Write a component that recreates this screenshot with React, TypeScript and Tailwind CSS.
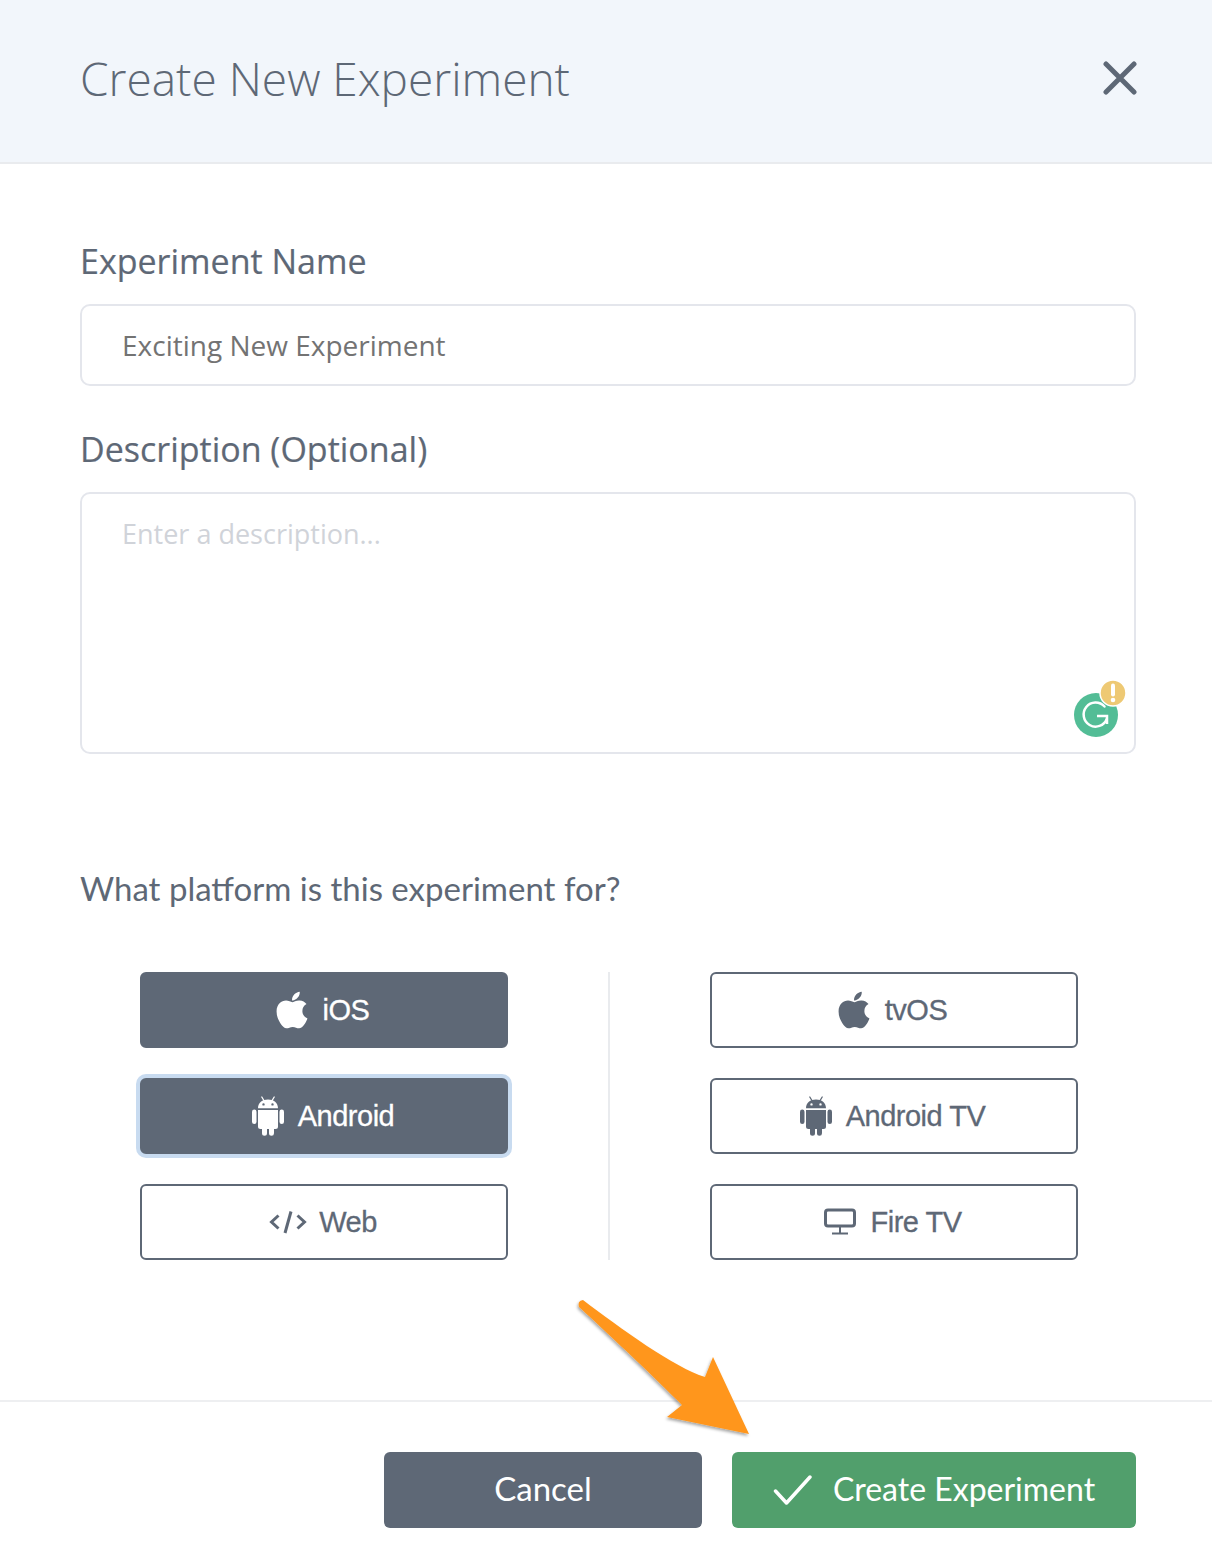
import React from "react";
import { FaApple } from "react-icons/fa";

const AndroidIcon = () => (
  <svg width="34" height="40" viewBox="0 0 34 40" fill="currentColor">
    <path d="M10.800 1 13.200 5M23.200 1 20.800 5" stroke="currentColor" strokeWidth="1.300" strokeLinecap="round" />
    <path fillRule="evenodd" d="M7 12.200C7 6.800 11.300 3.500 17 3.500s10 3.300 10 8.700H7ZM12.500 7.200a1.200 1.200 0 1 0 0 2.400 1.200 1.200 0 0 0 0-2.400Zm9 0a1.200 1.200 0 1 0 0 2.400 1.200 1.200 0 0 0 0-2.400Z" />
    <path d="M7 14h20v16.500a2.500 2.500 0 0 1-2.500 2.500H23v4.300a2.500 2.500 0 0 1-5 0V33h-2v4.300a2.500 2.500 0 0 1-5 0V33H9.500A2.500 2.500 0 0 1 7 30.500V14Z" />
    <rect x="1" y="13.500" width="4.500" height="14.500" rx="2.250" />
    <rect x="28.500" y="13.500" width="4.500" height="14.500" rx="2.250" />
  </svg>
);

const CodeIcon = () => (
  <svg width="38" height="24" viewBox="0 0 38 24" fill="none" stroke="currentColor" strokeWidth="3">
    <path d="M9.500 5.500 2.500 12l7 6.500" />
    <path d="M22 1.500 16 23" />
    <path d="M28.500 5.500 35.500 12l-7 6.500" />
  </svg>
);

const MonitorIcon = () => (
  <svg width="32" height="28" viewBox="0 0 32 28" fill="none" stroke="currentColor">
    <rect x="1.500" y="2" width="29" height="16" rx="2.500" strokeWidth="3" />
    <path d="M16 19v6" strokeWidth="2" />
    <path d="M8 25.500h16" strokeWidth="2" />
  </svg>
);

function PlatformButton({
  label,
  icon,
  active,
  focused,
  layout,
}: {
  label: string;
  icon: React.ReactNode;
  active?: boolean;
  focused?: boolean;
  layout: string;
}) {
  const base =
    "flex h-[76px] w-[368px] items-center justify-center rounded-[6px] border-2 font-['Liberation_Sans',sans-serif] text-[29px] tracking-[-0.5px] [-webkit-text-stroke:0.3px] " +
    layout;
  const tone = active
    ? " border-[#5e6876] bg-[#5e6876] text-white"
    : " border-[#5e6876] bg-white text-[#5e6876]";
  const ring = focused ? " shadow-[0_0_0_4px_#c8dbf0]" : "";
  return (
    <button className={base + tone + ring}>
      {icon}
      <span className="pt-[2px]">{label}</span>
    </button>
  );
}

export default function App() {
  return (
    <div className="relative h-[1544px] w-[1212px] overflow-hidden bg-white font-['Open_Sans',sans-serif]">
      <header className="flex h-[164px] items-center justify-between border-b-2 border-[#e9ebee] bg-[#f2f6fb] pl-20 pr-[75px]">
        <h1 className="pb-[6px] text-[46px] font-light leading-none text-[#5e6876]">Create New Experiment</h1>
        <svg width="34" height="34" viewBox="0 0 34 34" fill="none" stroke="#5e6876" strokeWidth="5" strokeLinecap="round" className="mb-[6px]">
          <path d="M3 3l28 28M31 3 3 31" />
        </svg>
      </header>

      <main className="pl-20 pr-[76px]">
        <label className="mt-[75px] block pb-[1px] text-[34px] leading-[44px] text-[#5e6876] [-webkit-text-stroke:0.2px]">Experiment Name</label>
        <div className="mt-[20px] flex h-[82px] items-center rounded-[10px] border-2 border-[#e4e6ec] pl-[40px] text-[28px] text-[#737373]">
          Exciting New Experiment
        </div>

        <label className="mt-[41px] block pb-[1px] text-[34px] leading-[44px] text-[#5e6876] [-webkit-text-stroke:0.2px]">Description (Optional)</label>
        <div className="mt-[20px] h-[262px] rounded-[10px] border-2 border-[#e4e6ec] pl-[40px] pt-[21px] text-[27px] leading-[38px] text-[#d0d3d9]">
          Enter a description...
        </div>

        <p className="mt-[115px] font-['Lato',sans-serif] text-[33px] leading-[38px] text-[#5e6876]">
          What platform is this experiment for?
        </p>

        <div className="ml-[60px] mt-[65px] flex w-[938px] justify-between">
          <div className="flex flex-col gap-[30px]">
            <PlatformButton label="iOS" active icon={<FaApple size={42} />} layout="gap-[10px] pr-[8px]" />
            <PlatformButton label="Android" active focused icon={<AndroidIcon />} layout="gap-[13px] pr-[3px]" />
            <PlatformButton label="Web" icon={<CodeIcon />} layout="gap-[12px] pr-[2px]" />
          </div>
          <div className="w-[2px] bg-[#e9ebee]" />
          <div className="flex flex-col gap-[30px]">
            <PlatformButton label="tvOS" icon={<FaApple size={42} />} layout="gap-[10px] pr-[8px]" />
            <PlatformButton label="Android TV" icon={<AndroidIcon />} layout="gap-[13px] pr-[4px]" />
            <PlatformButton label="Fire TV" icon={<MonitorIcon />} layout="gap-[14px] pr-[2px]" />
          </div>
        </div>
      </main>

      <footer className="mt-[140px] flex justify-end gap-[30px] border-t-2 border-[#eeeff1] pr-[76px] pt-[50px] font-['Lato',sans-serif] text-[32px] text-white">
        <button className="flex h-[76px] w-[318px] items-center justify-center rounded-[6px] bg-[#5e6876] pb-[2px] text-[33px]">Cancel</button>
        <button className="flex h-[76px] w-[404px] items-center justify-center gap-[20px] rounded-[6px] bg-[#519f6c]">
          <svg width="40" height="30" viewBox="0 0 40 30" fill="none" stroke="white" strokeWidth="3.500" strokeLinecap="round" strokeLinejoin="round">
            <path d="M2.500 16 13.500 28 37 2" />
          </svg>
          <span className="pb-[2px]">Create Experiment</span>
        </button>
      </footer>

      <svg className="absolute left-[1070px] top-[678px]" width="60" height="60" viewBox="0 0 60 60" fill="none">
        <circle cx="26" cy="37" r="22" fill="#53bd96" />
        <path d="M34.500 28.500A12 12 0 1 0 36.800 41" stroke="white" strokeWidth="2.500" strokeLinecap="round" />
        <path d="M27 38h10v8" stroke="white" strokeWidth="2.500" fill="none" />
        <circle cx="43" cy="15" r="13" fill="#eec974" stroke="white" strokeWidth="1.500" />
        <path d="M43 7.500v9" stroke="white" strokeWidth="4" strokeLinecap="round" />
        <circle cx="43" cy="22" r="2.300" fill="white" />
      </svg>

      <svg className="absolute left-[570px] top-[1290px]" width="190" height="150" viewBox="0 0 190 150" fill="none">
        <defs>
          <filter id="arrowShadow" x="-10%" y="-10%" width="125%" height="125%">
            <feDropShadow dx="-1" dy="2" stdDeviation="1.500" floodColor="#000" floodOpacity="0.35" />
          </filter>
        </defs>
        <path
          d="M9 17Q7 11 13 10C50 38 105 78 135 87L143 67 179 144 97 127 112 115C85 88 45 50 9 17Z"
          fill="#ff961c"
          filter="url(#arrowShadow)"
        />
      </svg>
    </div>
  );
}
